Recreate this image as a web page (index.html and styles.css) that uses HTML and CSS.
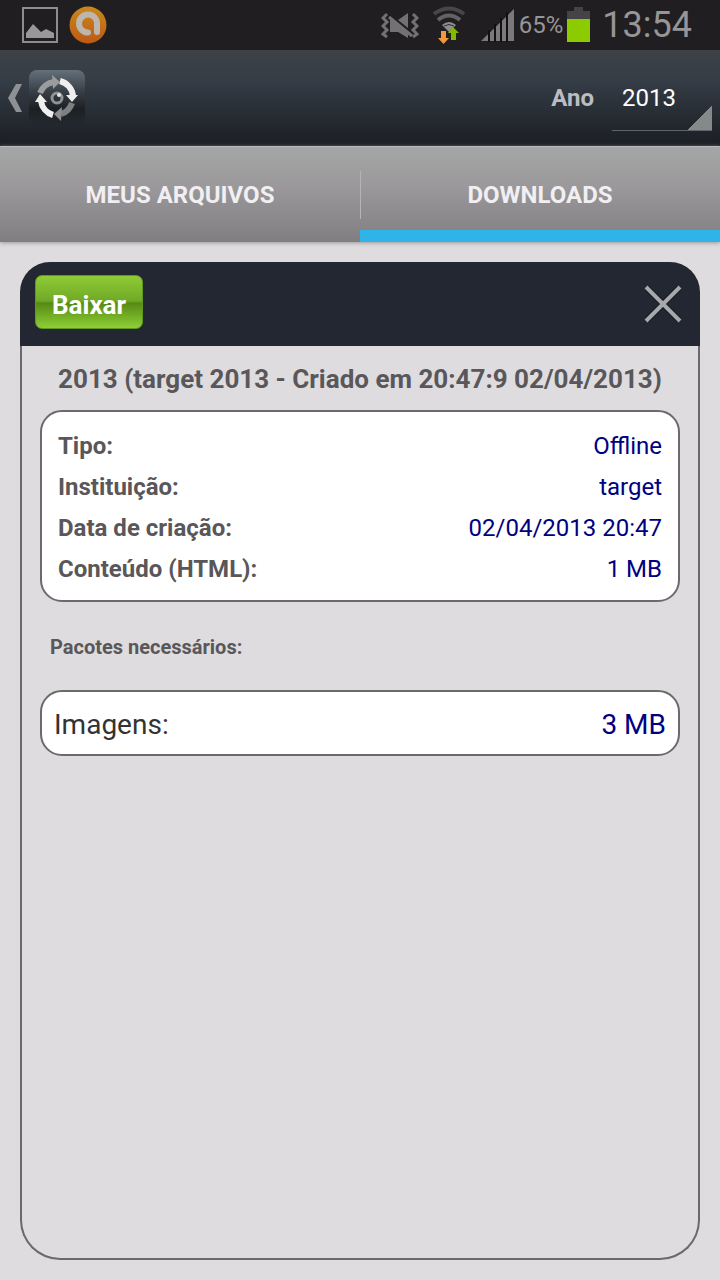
FILE: index.html
```html
<!DOCTYPE html>
<html lang="pt-BR">
<head>
<meta charset="utf-8">
<meta name="viewport" content="width=device-width, initial-scale=1">
<title>Downloads</title>
<link rel="stylesheet" href="styles.css">
</head>
<body>

<div class="status">
	<svg class="ico" width="38" height="38" viewBox="0 0 38 38">
		<rect x="2" y="2" width="34" height="34" fill="none" stroke="#8f8c8e" stroke-width="2"/>
		<path d="M5 32V27L12 18L20 26L25 23L33 27V32Z" fill="#9a9799"/>
	</svg>
	<svg class="ico" width="38" height="38" viewBox="0 0 38 38">
		<defs>
			<linearGradient id="orange" x1="0" y1="0" x2="0" y2="1">
				<stop offset="0" stop-color="#c9881c"/>
				<stop offset="1" stop-color="#bd5a14"/>
			</linearGradient>
		</defs>
		<circle cx="19" cy="19" r="18.5" fill="url(#orange)"/>
		<path d="M19 26.500A9 9 0 1 1 28 18V26" fill="none" stroke="#bcb6ae" stroke-width="6" stroke-linecap="round"/>
	</svg>
	<span class="space"></span>
	<svg class="ico" width="38" height="30" viewBox="0 0 38 30">
		<path d="M6 4L2 8L6 12L2 16L6 20L2 24L6 27M32 4L36 8L32 12L36 16L32 20L36 24L32 27" fill="none" stroke="#737173" stroke-width="3"/>
		<path d="M9 10H13L27 21V28L17 22H9Z" fill="#737173"/>
		<path d="M17 10L27 3V18Z" fill="#737173"/>
		<path d="M8 5L31 23" stroke="#201e20" stroke-width="2"/>
		<path d="M8 7L31 26" stroke="#737173" stroke-width="3"/>
	</svg>
	<svg class="ico wifi" width="34" height="38" viewBox="0 0 34 38">
		<path d="M1 8Q16 -3 31 8" fill="none" stroke="#484648" stroke-width="4"/>
		<path d="M5 14Q16 5 27 14" fill="none" stroke="#636163" stroke-width="4"/>
		<path d="M9 19Q16 13 23 19L16 26Z" fill="#8f8d8f"/>
		<path d="M11 20Q16 17 21 20" fill="none" stroke="#302e30" stroke-width="1"/>
		<path d="M8 25H13V32H16L10.500 38L5 32H8Z" fill="#f2993f"/>
		<path d="M20 21L26 27H23V34H18V27H15Z" fill="#82b800"/>
	</svg>
	<svg class="ico signal" width="34" height="34" viewBox="0 0 34 34">
		<path d="M0 33L33 1V33Z" fill="#7b797b"/>
		<path d="M8 22V34M14 16V34M20 10V34M26 4V34" stroke="#111" stroke-width="2"/>
	</svg>
	<span class="percent">65%</span>
	<svg class="ico battery" width="23" height="36" viewBox="0 0 23 36">
		<path d="M7 0H16V4H23V12H0V4H7Z" fill="#454345"/>
		<rect y="12" width="23" height="23" fill="#8ccb00"/>
	</svg>
	<span class="clock">13:54</span>
</div>

<header class="bar">
	<a class="back" href="#" aria-label="Voltar">
		<svg width="14" height="28" viewBox="0 0 14 28">
			<path d="M8 0H14L7 14L14 28H8L0 14Z" fill="#8e9094"/>
		</svg>
		<svg width="58" height="58" viewBox="0 0 58 58">
			<defs>
				<linearGradient id="tile" x1="0" y1="0" x2="0" y2="1">
					<stop offset="0" stop-color="#65707a"/>
					<stop offset="0.4" stop-color="#363d44"/>
					<stop offset="0.7" stop-color="#1c2024"/>
					<stop offset="1" stop-color="#1c2024" stop-opacity="0"/>
				</linearGradient>
			</defs>
			<rect x="1" y="1" width="56" height="56" rx="8" fill="url(#tile)"/>
			<path d="M12 24A17 17 0 0 1 26 13" fill="none" stroke="#9a9c9d" stroke-width="6"/>
			<path d="M24 6L32 13L25 20Z" fill="#9a9c9d"/>
			<path d="M32 12A17 17 0 0 1 45 27" fill="none" stroke="#efefef" stroke-width="6"/>
			<path d="M38 26H50L44 33Z" fill="#efefef"/>
			<path d="M44 34A17 17 0 0 1 33 45" fill="none" stroke="#7d7f80" stroke-width="6"/>
			<path d="M34 38L26 45L33 52Z" fill="#8d8f90"/>
			<path d="M25 46A17 17 0 0 1 13 32" fill="none" stroke="#efefef" stroke-width="6"/>
			<path d="M7 33H19L12 25Z" fill="#efefef"/>
			<circle cx="29" cy="29" r="5" fill="none" stroke="#909394" stroke-width="3"/>
			<circle cx="31" cy="26" r="2" fill="#e4e4e4"/>
		</svg>
	</a>
	<label class="year-label" for="ano">Ano</label>
	<select class="year" id="ano">
		<option>2013</option>
	</select>
</header>

<nav class="tabs">
	<a class="tab" href="#">MEUS ARQUIVOS</a>
	<a class="tab active" href="#" aria-current="page">DOWNLOADS</a>
</nav>

<main class="main">
	<section class="panel">
		<div class="panel-head">
			<button class="download" type="button">Baixar</button>
			<button class="close" type="button" aria-label="Fechar">
				<svg width="38" height="38" viewBox="0 0 38 38">
					<path d="M3 3L35 35M35 3L3 35" stroke="#10141b" stroke-width="6"/>
					<path d="M2 2L36 36M36 2L2 36" stroke="#a6a8ac" stroke-width="4"/>
				</svg>
			</button>
		</div>
		<div class="panel-body">
			<h1 class="title">2013 (target 2013 - Criado em 20:47:9 02/04/2013)</h1>
			<dl class="box">
				<div class="row"><dt>Tipo:</dt><dd>Offline</dd></div>
				<div class="row"><dt>Instituição:</dt><dd>target</dd></div>
				<div class="row"><dt>Data de criação:</dt><dd>02/04/2013 20:47</dd></div>
				<div class="row"><dt>Conteúdo (HTML):</dt><dd>1 MB</dd></div>
			</dl>
			<h2 class="subtitle">Pacotes necessários:</h2>
			<dl class="box pack">
				<div class="row"><dt>Imagens:</dt><dd>3 MB</dd></div>
			</dl>
		</div>
	</section>
</main>

</body>
</html>
```
FILE: styles.css
```css
*{
	box-sizing: border-box;
}
body{
	display: flex;
	flex-direction: column;
	min-height: 100vh;
	margin: 0;
	background-color: #dedcdf;
	font-family: Roboto, "Liberation Sans", sans-serif;
	color: #59575a;
}
h1, h2, dl, dd{
	margin: 0;
}
svg{
	display: block;
}

/* status bar */
.status{
	display: flex;
	align-items: center;
	height: 50px;
	padding: 0 28px 0 21px;
	background-color: #201e20;
	color: #979597;
}
.status .ico{
	flex: none;
	margin-right: 10px;
}
.space{
	flex: 1;
}
.status .wifi{
	margin-left: 4px;
	margin-right: 14px;
}
.status .signal{
	margin-right: 4px;
}
.status .battery{
	margin-right: 12px;
}
.percent{
	margin-right: 4px;
	font-size: 24px;
}
.clock{
	font-size: 36px;
}

/* action bar */
.bar{
	display: flex;
	align-items: center;
	height: 96px;
	padding: 0 8px;
	background: linear-gradient(#3e4248, #353d46 30%, #1b1e23);
}
.back{
	display: flex;
	align-items: center;
	gap: 6px;
	margin-right: auto;
}
.year-label{
	margin-right: 18px;
	font-size: 24px;
	font-weight: 700;
	color: #bbbdc2;
}
.year{
	appearance: none;
	width: 100px;
	height: 66px;
	padding: 0 10px;
	border: 0;
	border-bottom: 1px solid #5f6466;
	border-radius: 0;
	background: linear-gradient(135deg, transparent 50%, #85898a 50%) right bottom / 24px 24px no-repeat;
	font-family: inherit;
	font-size: 24px;
	color: #fff;
}

/* tabs */
.tabs{
	display: flex;
	height: 96px;
	border-top: 1px solid #bab8bb;
	background: linear-gradient(#a4a6a6, #9b999b 40%, #807e80);
	box-shadow: 0 1px 4px #999;
}
.tab{
	position: relative;
	flex: 1;
	display: flex;
	align-items: center;
	justify-content: center;
	font-size: 24px;
	font-weight: 700;
	color: #f1eff2;
	text-decoration: none;
}
.tab.active{
	border-bottom: 12px solid #30b3e6;
	padding-top: 12px;
}
.tab.active::before{
	content: "";
	position: absolute;
	left: 0;
	top: 24px;
	width: 1px;
	height: 48px;
	background-color: #b5b3b5;
}

/* panel */
.main{
	flex: 1;
	display: flex;
	padding: 20px;
}
.panel{
	flex: 1;
	display: flex;
	flex-direction: column;
}
.panel-head{
	display: flex;
	align-items: center;
	justify-content: space-between;
	height: 84px;
	padding: 0 18px 0 15px;
	border-radius: 30px 30px 0 0;
	background-color: #232731;
}
.download{
	height: 54px;
	margin-bottom: 4px;
	padding: 6px 16px 0;
	border: 1px solid #5e9a1c;
	border-radius: 7px;
	background: linear-gradient(#8fcb35, #70a927 48%, #578a15 52%, #659d1c 65%, #8fce36);
	font-family: inherit;
	font-size: 26px;
	font-weight: 700;
	color: #fff;
}
.close{
	padding: 0;
	border: 0;
	background: none;
}
.panel-body{
	flex: 1;
	padding: 16px 18px;
	border: 2px solid #6b696c;
	border-top: 0;
	border-radius: 0 0 40px 40px;
}
.title{
	margin-bottom: 14px;
	font-size: 26px;
	line-height: 34px;
	text-align: center;
}
.box{
	padding: 14px 16px 10px;
	border: 2px solid #6b696c;
	border-radius: 22px;
	background-color: #fff;
	font-size: 24px;
	line-height: 41px;
}
.row{
	display: flex;
	justify-content: space-between;
}
.row dt{
	font-weight: 700;
}
.row dd{
	color: #000080;
}
.subtitle{
	margin: 32px 10px 30px;
	font-size: 20px;
	line-height: 26px;
}
.pack{
	padding: 12px 12px 9px;
	font-size: 28px;
}
.pack dt{
	font-weight: 400;
	color: #333;
}
```
